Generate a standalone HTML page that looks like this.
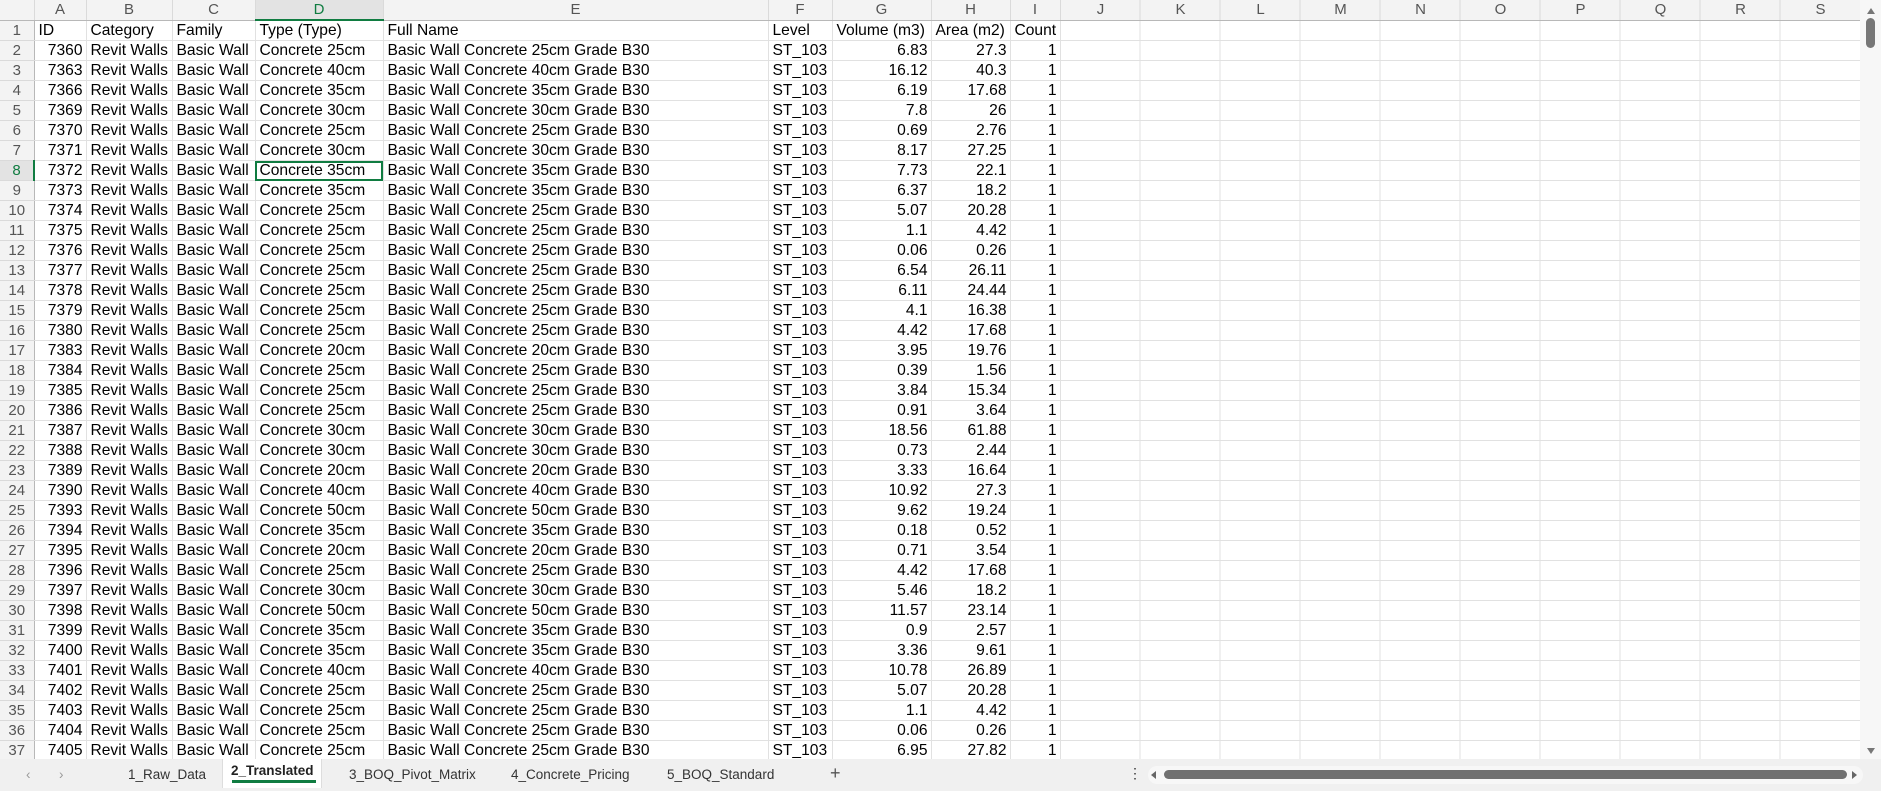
<!DOCTYPE html>
<html><head><meta charset="utf-8"><style>
*{margin:0;padding:0;box-sizing:border-box}
body{width:1881px;height:791px;overflow:hidden;background:#fff;font-family:"Liberation Sans",Arial,sans-serif;position:relative}
table{border-collapse:collapse;table-layout:fixed;position:absolute;left:0;top:0;width:1860px}
tr{height:20px}
thead tr{height:20px}
td,th{height:20px;border-right:1px solid #e1e1e1;border-bottom:1px solid #e1e1e1;font-size:15.6px;font-weight:normal;color:#000;white-space:nowrap;overflow:hidden;padding:1px 3px 0 3px;line-height:18px;text-align:left}
td{padding-left:4px}
thead th{height:20px;background:#f3f3f3;color:#555;text-align:center;border-bottom:1px solid #b8b8b8;border-right:1px solid #dadada;font-size:15px;line-height:18px;padding:1px 0 0 0}
tbody th{background:#f3f3f3;color:#555;text-align:center;border-right:1px solid #b8b8b8;border-bottom:1px solid #dadada;padding:1px 0 0 0;font-size:15px}
td.r{text-align:right;padding-right:3px}
td.e{padding:0;background:repeating-linear-gradient(to right,transparent 0 79px,#e1e1e1 79px 80px)}
thead th.e{padding:0;background:#f3f3f3 repeating-linear-gradient(to right,transparent 0 79px,#dadada 79px 80px);text-align:left}
thead th.e span{display:inline-block;width:80px;text-align:center}
thead th.sel{color:#107c41;background:#e3e3e3;border-bottom:2px solid #107c41}
tbody th.sel{color:#107c41;background:#e3e3e3;border-right:2px solid #107c41}
td.cur{outline:2px solid #107c41;outline-offset:-2px}
.vs{position:absolute;left:1860px;top:0;width:21px;height:759px;background:#f7f7f7}
.tabs{position:absolute;left:0;top:759px;width:1881px;height:32px;background:#f0f0f0;font-size:13.5px;color:#333}
.tabs span{position:absolute;top:8px}
</style></head><body>
<table>
<colgroup><col style="width:34px"><col style="width:52px"><col style="width:86px"><col style="width:83px"><col style="width:128px"><col style="width:385px"><col style="width:64px"><col style="width:99px"><col style="width:79px"><col style="width:50px"><col style="width:800px"></colgroup>
<thead><tr><th></th><th>A</th><th>B</th><th>C</th><th class="sel">D</th><th>E</th><th>F</th><th>G</th><th>H</th><th>I</th><th class="e"><span>J</span><span>K</span><span>L</span><span>M</span><span>N</span><span>O</span><span>P</span><span>Q</span><span>R</span><span>S</span></th></tr></thead>
<tbody>
<tr><th>1</th><td>ID</td><td>Category</td><td>Family</td><td>Type (Type)</td><td>Full Name</td><td>Level</td><td>Volume (m3)</td><td>Area (m2)</td><td>Count</td><td class="e"></td></tr>
<tr><th>2</th><td class="r">7360</td><td>Revit Walls</td><td>Basic Wall</td><td>Concrete 25cm</td><td>Basic Wall Concrete 25cm Grade B30</td><td>ST_103</td><td class="r">6.83</td><td class="r">27.3</td><td class="r">1</td><td class="e"></td></tr>
<tr><th>3</th><td class="r">7363</td><td>Revit Walls</td><td>Basic Wall</td><td>Concrete 40cm</td><td>Basic Wall Concrete 40cm Grade B30</td><td>ST_103</td><td class="r">16.12</td><td class="r">40.3</td><td class="r">1</td><td class="e"></td></tr>
<tr><th>4</th><td class="r">7366</td><td>Revit Walls</td><td>Basic Wall</td><td>Concrete 35cm</td><td>Basic Wall Concrete 35cm Grade B30</td><td>ST_103</td><td class="r">6.19</td><td class="r">17.68</td><td class="r">1</td><td class="e"></td></tr>
<tr><th>5</th><td class="r">7369</td><td>Revit Walls</td><td>Basic Wall</td><td>Concrete 30cm</td><td>Basic Wall Concrete 30cm Grade B30</td><td>ST_103</td><td class="r">7.8</td><td class="r">26</td><td class="r">1</td><td class="e"></td></tr>
<tr><th>6</th><td class="r">7370</td><td>Revit Walls</td><td>Basic Wall</td><td>Concrete 25cm</td><td>Basic Wall Concrete 25cm Grade B30</td><td>ST_103</td><td class="r">0.69</td><td class="r">2.76</td><td class="r">1</td><td class="e"></td></tr>
<tr><th>7</th><td class="r">7371</td><td>Revit Walls</td><td>Basic Wall</td><td>Concrete 30cm</td><td>Basic Wall Concrete 30cm Grade B30</td><td>ST_103</td><td class="r">8.17</td><td class="r">27.25</td><td class="r">1</td><td class="e"></td></tr>
<tr><th class="sel">8</th><td class="r">7372</td><td>Revit Walls</td><td>Basic Wall</td><td class="cur">Concrete 35cm</td><td>Basic Wall Concrete 35cm Grade B30</td><td>ST_103</td><td class="r">7.73</td><td class="r">22.1</td><td class="r">1</td><td class="e"></td></tr>
<tr><th>9</th><td class="r">7373</td><td>Revit Walls</td><td>Basic Wall</td><td>Concrete 35cm</td><td>Basic Wall Concrete 35cm Grade B30</td><td>ST_103</td><td class="r">6.37</td><td class="r">18.2</td><td class="r">1</td><td class="e"></td></tr>
<tr><th>10</th><td class="r">7374</td><td>Revit Walls</td><td>Basic Wall</td><td>Concrete 25cm</td><td>Basic Wall Concrete 25cm Grade B30</td><td>ST_103</td><td class="r">5.07</td><td class="r">20.28</td><td class="r">1</td><td class="e"></td></tr>
<tr><th>11</th><td class="r">7375</td><td>Revit Walls</td><td>Basic Wall</td><td>Concrete 25cm</td><td>Basic Wall Concrete 25cm Grade B30</td><td>ST_103</td><td class="r">1.1</td><td class="r">4.42</td><td class="r">1</td><td class="e"></td></tr>
<tr><th>12</th><td class="r">7376</td><td>Revit Walls</td><td>Basic Wall</td><td>Concrete 25cm</td><td>Basic Wall Concrete 25cm Grade B30</td><td>ST_103</td><td class="r">0.06</td><td class="r">0.26</td><td class="r">1</td><td class="e"></td></tr>
<tr><th>13</th><td class="r">7377</td><td>Revit Walls</td><td>Basic Wall</td><td>Concrete 25cm</td><td>Basic Wall Concrete 25cm Grade B30</td><td>ST_103</td><td class="r">6.54</td><td class="r">26.11</td><td class="r">1</td><td class="e"></td></tr>
<tr><th>14</th><td class="r">7378</td><td>Revit Walls</td><td>Basic Wall</td><td>Concrete 25cm</td><td>Basic Wall Concrete 25cm Grade B30</td><td>ST_103</td><td class="r">6.11</td><td class="r">24.44</td><td class="r">1</td><td class="e"></td></tr>
<tr><th>15</th><td class="r">7379</td><td>Revit Walls</td><td>Basic Wall</td><td>Concrete 25cm</td><td>Basic Wall Concrete 25cm Grade B30</td><td>ST_103</td><td class="r">4.1</td><td class="r">16.38</td><td class="r">1</td><td class="e"></td></tr>
<tr><th>16</th><td class="r">7380</td><td>Revit Walls</td><td>Basic Wall</td><td>Concrete 25cm</td><td>Basic Wall Concrete 25cm Grade B30</td><td>ST_103</td><td class="r">4.42</td><td class="r">17.68</td><td class="r">1</td><td class="e"></td></tr>
<tr><th>17</th><td class="r">7383</td><td>Revit Walls</td><td>Basic Wall</td><td>Concrete 20cm</td><td>Basic Wall Concrete 20cm Grade B30</td><td>ST_103</td><td class="r">3.95</td><td class="r">19.76</td><td class="r">1</td><td class="e"></td></tr>
<tr><th>18</th><td class="r">7384</td><td>Revit Walls</td><td>Basic Wall</td><td>Concrete 25cm</td><td>Basic Wall Concrete 25cm Grade B30</td><td>ST_103</td><td class="r">0.39</td><td class="r">1.56</td><td class="r">1</td><td class="e"></td></tr>
<tr><th>19</th><td class="r">7385</td><td>Revit Walls</td><td>Basic Wall</td><td>Concrete 25cm</td><td>Basic Wall Concrete 25cm Grade B30</td><td>ST_103</td><td class="r">3.84</td><td class="r">15.34</td><td class="r">1</td><td class="e"></td></tr>
<tr><th>20</th><td class="r">7386</td><td>Revit Walls</td><td>Basic Wall</td><td>Concrete 25cm</td><td>Basic Wall Concrete 25cm Grade B30</td><td>ST_103</td><td class="r">0.91</td><td class="r">3.64</td><td class="r">1</td><td class="e"></td></tr>
<tr><th>21</th><td class="r">7387</td><td>Revit Walls</td><td>Basic Wall</td><td>Concrete 30cm</td><td>Basic Wall Concrete 30cm Grade B30</td><td>ST_103</td><td class="r">18.56</td><td class="r">61.88</td><td class="r">1</td><td class="e"></td></tr>
<tr><th>22</th><td class="r">7388</td><td>Revit Walls</td><td>Basic Wall</td><td>Concrete 30cm</td><td>Basic Wall Concrete 30cm Grade B30</td><td>ST_103</td><td class="r">0.73</td><td class="r">2.44</td><td class="r">1</td><td class="e"></td></tr>
<tr><th>23</th><td class="r">7389</td><td>Revit Walls</td><td>Basic Wall</td><td>Concrete 20cm</td><td>Basic Wall Concrete 20cm Grade B30</td><td>ST_103</td><td class="r">3.33</td><td class="r">16.64</td><td class="r">1</td><td class="e"></td></tr>
<tr><th>24</th><td class="r">7390</td><td>Revit Walls</td><td>Basic Wall</td><td>Concrete 40cm</td><td>Basic Wall Concrete 40cm Grade B30</td><td>ST_103</td><td class="r">10.92</td><td class="r">27.3</td><td class="r">1</td><td class="e"></td></tr>
<tr><th>25</th><td class="r">7393</td><td>Revit Walls</td><td>Basic Wall</td><td>Concrete 50cm</td><td>Basic Wall Concrete 50cm Grade B30</td><td>ST_103</td><td class="r">9.62</td><td class="r">19.24</td><td class="r">1</td><td class="e"></td></tr>
<tr><th>26</th><td class="r">7394</td><td>Revit Walls</td><td>Basic Wall</td><td>Concrete 35cm</td><td>Basic Wall Concrete 35cm Grade B30</td><td>ST_103</td><td class="r">0.18</td><td class="r">0.52</td><td class="r">1</td><td class="e"></td></tr>
<tr><th>27</th><td class="r">7395</td><td>Revit Walls</td><td>Basic Wall</td><td>Concrete 20cm</td><td>Basic Wall Concrete 20cm Grade B30</td><td>ST_103</td><td class="r">0.71</td><td class="r">3.54</td><td class="r">1</td><td class="e"></td></tr>
<tr><th>28</th><td class="r">7396</td><td>Revit Walls</td><td>Basic Wall</td><td>Concrete 25cm</td><td>Basic Wall Concrete 25cm Grade B30</td><td>ST_103</td><td class="r">4.42</td><td class="r">17.68</td><td class="r">1</td><td class="e"></td></tr>
<tr><th>29</th><td class="r">7397</td><td>Revit Walls</td><td>Basic Wall</td><td>Concrete 30cm</td><td>Basic Wall Concrete 30cm Grade B30</td><td>ST_103</td><td class="r">5.46</td><td class="r">18.2</td><td class="r">1</td><td class="e"></td></tr>
<tr><th>30</th><td class="r">7398</td><td>Revit Walls</td><td>Basic Wall</td><td>Concrete 50cm</td><td>Basic Wall Concrete 50cm Grade B30</td><td>ST_103</td><td class="r">11.57</td><td class="r">23.14</td><td class="r">1</td><td class="e"></td></tr>
<tr><th>31</th><td class="r">7399</td><td>Revit Walls</td><td>Basic Wall</td><td>Concrete 35cm</td><td>Basic Wall Concrete 35cm Grade B30</td><td>ST_103</td><td class="r">0.9</td><td class="r">2.57</td><td class="r">1</td><td class="e"></td></tr>
<tr><th>32</th><td class="r">7400</td><td>Revit Walls</td><td>Basic Wall</td><td>Concrete 35cm</td><td>Basic Wall Concrete 35cm Grade B30</td><td>ST_103</td><td class="r">3.36</td><td class="r">9.61</td><td class="r">1</td><td class="e"></td></tr>
<tr><th>33</th><td class="r">7401</td><td>Revit Walls</td><td>Basic Wall</td><td>Concrete 40cm</td><td>Basic Wall Concrete 40cm Grade B30</td><td>ST_103</td><td class="r">10.78</td><td class="r">26.89</td><td class="r">1</td><td class="e"></td></tr>
<tr><th>34</th><td class="r">7402</td><td>Revit Walls</td><td>Basic Wall</td><td>Concrete 25cm</td><td>Basic Wall Concrete 25cm Grade B30</td><td>ST_103</td><td class="r">5.07</td><td class="r">20.28</td><td class="r">1</td><td class="e"></td></tr>
<tr><th>35</th><td class="r">7403</td><td>Revit Walls</td><td>Basic Wall</td><td>Concrete 25cm</td><td>Basic Wall Concrete 25cm Grade B30</td><td>ST_103</td><td class="r">1.1</td><td class="r">4.42</td><td class="r">1</td><td class="e"></td></tr>
<tr><th>36</th><td class="r">7404</td><td>Revit Walls</td><td>Basic Wall</td><td>Concrete 25cm</td><td>Basic Wall Concrete 25cm Grade B30</td><td>ST_103</td><td class="r">0.06</td><td class="r">0.26</td><td class="r">1</td><td class="e"></td></tr>
<tr><th>37</th><td class="r">7405</td><td>Revit Walls</td><td>Basic Wall</td><td>Concrete 25cm</td><td>Basic Wall Concrete 25cm Grade B30</td><td>ST_103</td><td class="r">6.95</td><td class="r">27.82</td><td class="r">1</td><td class="e"></td></tr>
</tbody></table>
<div class="vs">
<div style="position:absolute;left:7px;top:8px;width:0;height:0;border-left:4px solid transparent;border-right:4px solid transparent;border-bottom:6px solid #777"></div>
<div style="position:absolute;left:6px;top:18px;width:9px;height:30px;border-radius:5px;background:#777"></div>
<div style="position:absolute;left:7px;top:748px;width:0;height:0;border-left:4px solid transparent;border-right:4px solid transparent;border-top:6px solid #777"></div>
</div>
<div class="tabs">
<span style="left:26px;color:#999">&#8249;</span><span style="left:59px;color:#999">&#8250;</span>
<span style="left:128px">1_Raw_Data</span>
<div style="position:absolute;left:222px;top:0;width:100px;height:29px;background:#fff;border-left:1px solid #ddd;border-right:1px solid #ddd"></div>
<span style="left:231px;top:4px;font-weight:bold;color:#222">2_Translated</span>
<div style="position:absolute;left:232px;top:21px;width:84px;height:3px;background:#107c41"></div>
<span style="left:349px">3_BOQ_Pivot_Matrix</span>
<span style="left:511px">4_Concrete_Pricing</span>
<span style="left:667px">5_BOQ_Standard</span>
<span style="left:830px;top:4px;font-size:18px;color:#555">+</span>
<span style="left:1128px;top:6px;font-size:14px;color:#333">&#8942;</span>
<div style="position:absolute;left:1148px;top:7px;width:715px;height:18px;border-radius:9px;background:#f7f7f7"></div>
<div style="position:absolute;left:1151px;top:12px;width:0;height:0;border-top:4px solid transparent;border-bottom:4px solid transparent;border-right:5px solid #666"></div>
<div style="position:absolute;left:1164px;top:11px;width:683px;height:9px;border-radius:5px;background:#707070"></div>
<div style="position:absolute;left:1852px;top:12px;width:0;height:0;border-top:4px solid transparent;border-bottom:4px solid transparent;border-left:5px solid #666"></div>
</div>
</body></html>
